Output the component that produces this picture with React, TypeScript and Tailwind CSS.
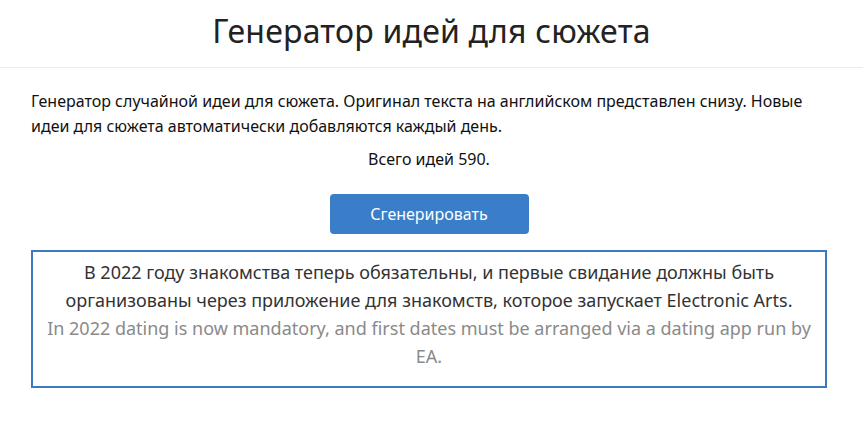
export default function App() {
  return (
    <div className="min-h-[429px] bg-white font-['Noto_Sans',sans-serif] text-[#222]">
      <header className="border-b border-[#ececec] h-[68px] flex items-center justify-center">
        <h1 className="text-[32px] text-[#222] tracking-[0.2px] leading-none -mt-[6px]">Генератор идей для сюжета</h1>
      </header>
      <main className="ml-[31px] w-[796px] pt-[21px]">
        <p className="text-[16px] leading-[25px] text-[#111]">
          Генератор случайной идеи для сюжета. Оригинал текста на английском представлен снизу. Новые идеи для сюжета автоматически добавляются каждый день.
        </p>
        <p className="text-center text-[16px] leading-[25px] mt-[8px] text-[#111]">Всего идей 590.</p>
        <div className="flex justify-center mt-[22px]">
          <button className="w-[199px] h-[40px] rounded-[4px] bg-[#3a7ec9] text-white text-[16px]">Сгенерировать</button>
        </div>
        <div className="mt-[16px] h-[138px] border-2 border-[#3d79c1] px-[12px] pt-[6px] text-center text-[18px] leading-[28px]">
          <div className="text-[#333]">
            В 2022 году знакомства теперь обязательны, и первые свидание должны быть организованы через приложение для знакомств, которое запускает Electronic Arts.
          </div>
          <div className="text-[#8a8a8a]">
            In 2022 dating is now mandatory, and first dates must be arranged via a dating app run by EA.
          </div>
        </div>
      </main>
    </div>
  );
}
